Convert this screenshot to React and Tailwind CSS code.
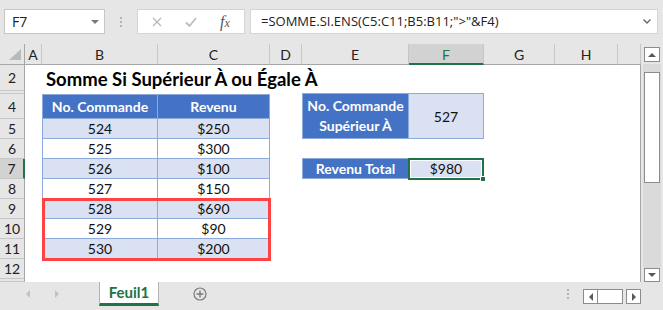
import React from 'react';

const COLS = ['col-start-1', 'col-start-2', 'col-start-3', 'col-start-4', 'col-start-5', 'col-start-6', 'col-start-7', 'col-start-8', 'col-start-9', 'col-start-10'];
const ROWS = ['row-start-1', 'row-start-2', 'row-start-3', 'row-start-4', 'row-start-5', 'row-start-6', 'row-start-7', 'row-start-8', 'row-start-9', 'row-start-10', 'row-start-11', 'row-start-12', 'row-start-13'];
const LETTERS = ['', 'A', 'B', 'C', 'D', 'E', 'F', 'G', 'H', ''];
const DATA = [
    ['524', '$250'],
    ['525', '$300'],
    ['526', '$100'],
    ['527', '$150'],
    ['528', '$690'],
    ['529', '$90'],
    ['530', '$200'],
];

const T_CELL = 'flex items-center justify-center border-r border-b border-[#8ea9db] text-[14px] text-[#111]';
const T_HEAD = 'flex items-center justify-center border-r border-b border-[#8ea9db] bg-[#4472c4] text-white font-bold text-[14px]';

function Triangle({ dir = 'down', className = '' }) {
    const pts = {
        down: '0,0 8,0 4,4',
        up: '0,4 8,4 4,0',
        left: '4,0 4,8 0,4',
        right: '0,0 0,8 4,4',
    }[dir];
    const vb = dir === 'left' || dir === 'right' ? '0 0 4 8' : '0 0 8 4';
    return (
        <svg viewBox={vb} className={className}>
            <polygon points={pts} fill="currentColor" />
        </svg>
    );
}

function Sheet() {
    const cells = [];

    // column headers
    LETTERS.forEach((l, i) => {
        if (i === 0) {
            cells.push(
                <div key="corner" className="col-start-1 row-start-1 bg-[#e6e6e6] border-r border-b border-[#a6a6a6] flex items-end justify-end pr-[3px] pb-[4px]">
                    <svg viewBox="0 0 12 11" className="w-[12px] h-[11px]">
                        <polygon points="12,0 12,11 0,11" fill="#b9b9b9" />
                    </svg>
                </div>
            );
            return;
        }
        const sel = i === 6;
        cells.push(
            <div
                key={`h${i}`}
                className={`${COLS[i]} row-start-1 flex items-center justify-center text-[14px] ${sel
                    ? 'bg-[#d2d2d2] border-b-2 border-b-[#217346] text-[#217346] border-r border-r-[#c6c6c6] pt-px'
                    : 'bg-[#e6e6e6] border-b border-b-[#a6a6a6] border-r border-r-[#c6c6c6] text-[#222]'}`}
            >
                {l}
            </div>
        );
    });

    // row headers
    for (let r = 2; r <= 13; r++) {
        const sel = r === 7;
        const label = r === 3 || r === 13 ? '' : String(r);
        cells.push(
            <div
                key={`r${r}`}
                className={`col-start-1 ${ROWS[r - 1]} flex items-center justify-center text-[14px] ${sel
                    ? 'bg-[#d2d2d2] border-r-2 border-r-[#217346] border-b border-b-[#c6c6c6] text-[#222]'
                    : 'bg-[#e6e6e6] border-r border-r-[#a6a6a6] border-b border-b-[#c6c6c6] text-[#222]'}`}
            >
                {label}
            </div>
        );
    }

    // title
    cells.push(
        <div key="title" className="col-start-3 col-span-7 row-start-2 flex items-end pl-[4px] pb-px text-[18.5px] leading-[22px] font-bold text-black whitespace-nowrap">
            Somme Si Supérieur À ou Égale À
        </div>
    );

    // main table
    cells.push(<div key="b4" className={`col-start-3 row-start-4 border-l border-t ${T_HEAD}`}>No. Commande</div>);
    cells.push(<div key="c4" className={`col-start-4 row-start-4 border-t ${T_HEAD}`}>Revenu</div>);
    DATA.forEach(([n, v], i) => {
        const r = i + 5;
        const band = r % 2 === 1 ? 'bg-[#d9e1f2]' : 'bg-white';
        cells.push(<div key={`b${r}`} className={`col-start-3 ${ROWS[r - 1]} border-l ${band} ${T_CELL}`}>{n}</div>);
        cells.push(<div key={`c${r}`} className={`col-start-4 ${ROWS[r - 1]} ${band} ${T_CELL}`}>{v}</div>);
    });

    // criteria box
    cells.push(
        <div key="e4" className={`col-start-6 row-start-4 row-span-2 border-l border-t flex-col leading-[20px] -mt-px ${T_HEAD}`}>
            <span>No. Commande</span>
            <span>Supérieur À</span>
        </div>
    );
    cells.push(<div key="f4" className={`col-start-7 row-start-4 row-span-2 border-t bg-[#d9e1f2] -mt-px ${T_CELL}`}>527</div>);

    // total
    cells.push(<div key="e7" className={`col-start-6 row-start-7 border-l border-t -mt-px ${T_HEAD}`}>Revenu Total</div>);
    cells.push(<div key="f7" className={`col-start-7 row-start-7 border-t bg-[#d9e1f2] -mt-px ${T_CELL}`}>$980</div>);

    // red highlight around rows 9-11
    cells.push(
        <div key="red" className="col-start-3 col-span-2 row-start-9 row-span-3 -mt-px -mb-[2px] -mr-px border-[3px] border-[#ff4242] pointer-events-none z-10" />
    );

    // selection on F7
    cells.push(
        <div key="sel" className="col-start-7 row-start-7 -ml-px -mt-px -mb-px border-2 border-[#217346] shadow-[inset_0_0_0_1px_white] relative z-10">
            <div className="absolute -right-[4px] -bottom-[4px] w-[6px] h-[6px] bg-[#217346] border border-white" />
        </div>
    );

    return (
        <div className="grid grid-cols-[25px_17px_116px_112px_32px_107px_75px_71px_63px_23px] grid-rows-[21px_26px_3px_25px_20px_20px_20px_20px_20px_20px_20px_20px_3px] bg-white border-r border-[#a6a6a6] w-[641px]">
            {cells}
        </div>
    );
}

function VScroll() {
    return (
        <div className="w-[22px] bg-[#e6e6e6] flex flex-col items-center pt-[3px]">
            <div className="w-[16px] h-[15px] bg-white border border-[#8c8c8c] flex items-center justify-center text-[#595959]">
                <Triangle dir="up" className="w-[8px] h-[4px]" />
            </div>
            <div className="mt-[2px] w-[18px] flex-1 bg-[#dadada] flex flex-col items-center pt-[8px]">
                <div className="w-[16px] h-[111px] bg-white border border-[#8c8c8c]" />
            </div>
            <div className="w-[16px] h-[14px] bg-white border border-[#8c8c8c] flex items-center justify-center text-[#595959]">
                <Triangle dir="down" className="w-[8px] h-[4px]" />
            </div>
        </div>
    );
}

function BottomBar() {
    return (
        <div className="h-[28px] bg-[#e6e6e6] flex items-start">
            <div className="ml-[21px] w-[14px] h-[24px] flex items-center justify-center text-[#c2c2c2]">
                <Triangle dir="left" className="w-[4px] h-[8px]" />
            </div>
            <div className="ml-[15px] w-[14px] h-[24px] flex items-center justify-center text-[#c2c2c2]">
                <Triangle dir="right" className="w-[4px] h-[8px]" />
            </div>
            <div className="ml-[35px] w-[60px] h-[24px] bg-white border-x border-[#b4b4b4] border-b-[3px] border-b-[#217346] flex items-center justify-center text-[15px] font-bold text-[#217346]">
                Feuil1
            </div>
            <div className="ml-[34px] h-[24px] flex items-center">
                <svg viewBox="0 0 14 14" className="w-[14px] h-[14px]">
                    <circle cx="7" cy="7" r="6" fill="none" stroke="#7a7a7a" strokeWidth="1.2" />
                    <path d="M7 3.5v7M3.5 7h7" stroke="#7a7a7a" strokeWidth="1.4" />
                </svg>
            </div>
            <div className="ml-auto mt-[7px] flex flex-col gap-[2px] mr-[14px]">
                <span className="w-[2px] h-[2px] bg-[#b4b4b4]" />
                <span className="w-[2px] h-[2px] bg-[#b4b4b4]" />
                <span className="w-[2px] h-[2px] bg-[#b4b4b4]" />
            </div>
            <div className="mt-[7px] flex mr-[22px]">
                <div className="w-[15px] h-[15px] bg-white border border-[#8c8c8c] flex items-center justify-center text-[#595959]">
                    <Triangle dir="left" className="w-[4px] h-[8px]" />
                </div>
                <div className="w-[25px] h-[15px] bg-white border-y border-r border-[#8c8c8c]" />
                <div className="ml-[3px] w-[15px] h-[15px] bg-white border border-[#8c8c8c] flex items-center justify-center text-[#595959]">
                    <Triangle dir="right" className="w-[4px] h-[8px]" />
                </div>
            </div>
        </div>
    );
}

function FormulaBar() {
    return (
        <div className="h-[44px] bg-[#e6e6e6] flex items-start pt-[9px] pl-[4px]">
            <div className="w-[101px] h-[25px] bg-white border border-[#c6c6c6] flex items-center pl-[7px] pr-[5px]">
                <span className="font-['Open_Sans',sans-serif] text-[14px] text-[#222]">F7</span>
                <span className="ml-auto text-[#7a7a7a]">
                    <Triangle dir="down" className="w-[8px] h-[4px]" />
                </span>
            </div>
            <div className="w-[32px] h-[25px] flex flex-col items-center justify-center gap-[2px]">
                <span className="w-[2px] h-[2px] bg-[#b4b4b4]" />
                <span className="w-[2px] h-[2px] bg-[#b4b4b4]" />
                <span className="w-[2px] h-[2px] bg-[#b4b4b4]" />
            </div>
            <div className="w-[108px] h-[25px] bg-white border border-[#d4d4d4] flex items-center">
                <div className="w-[38px] flex justify-center">
                    <svg viewBox="0 0 10 10" className="w-[10px] h-[10px]">
                        <path d="M1 1l8 8M9 1l-8 8" stroke="#b8b8b8" strokeWidth="1.3" />
                    </svg>
                </div>
                <div className="w-[30px] flex justify-center">
                    <svg viewBox="0 0 12 10" className="w-[12px] h-[10px]">
                        <path d="M1 5.5l3.5 3.5L11 1" fill="none" stroke="#bdbdbd" strokeWidth="1.8" />
                    </svg>
                </div>
                <div className="w-[38px] flex justify-center font-['Liberation_Serif',serif] italic text-[16px] text-[#555] leading-none">
                    f<span className="text-[12px] mt-[3px]">x</span>
                </div>
            </div>
            <div className="ml-[5px] w-[408px] h-[25px] bg-white border border-[#d4d4d4] flex items-center pl-[10px] pr-[6px]">
                <span className="font-['Open_Sans',sans-serif] text-[13px] text-[#222] whitespace-nowrap">=SOMME.SI.ENS(C5:C11;B5:B11;"&gt;"&amp;F4)</span>
                <svg viewBox="0 0 8 5" className="ml-auto w-[8px] h-[5px]">
                    <path d="M0.5 0.5L4 4l3.5-3.5" fill="none" stroke="#666" strokeWidth="1.4" />
                </svg>
            </div>
        </div>
    );
}

export default function App() {
    return (
        <div className="w-[663px] h-[310px] overflow-hidden bg-[#e6e6e6] font-['Lato',sans-serif]">
            <FormulaBar />
            <div className="flex h-[238px]">
                <Sheet />
                <VScroll />
            </div>
            <BottomBar />
        </div>
    );
}
